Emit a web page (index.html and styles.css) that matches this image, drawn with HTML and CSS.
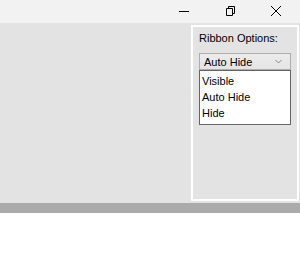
FILE: index.html
```html
<!DOCTYPE html>
<html>
<head>
<meta charset="utf-8">
<link rel="stylesheet" href="styles.css">
</head>
<body>
<div class="titlebar">
  <div class="tbtn">
    <svg width="12" height="12" viewBox="0 0 12 12"><path d="M1 6.5H11" stroke="#000" stroke-width="1" fill="none"/></svg>
  </div>
  <div class="tbtn">
    <svg width="12" height="12" viewBox="0 0 12 12"><path d="M2.5 3.5H8.5V10.5H2.5Z M4.5 3.5V1.5H10.5V8.5H8.5" stroke="#000" stroke-width="1" fill="none"/></svg>
  </div>
  <div class="tbtn">
    <svg width="12" height="12" viewBox="0 0 12 12"><path d="M1 1L11 11M11 1L1 11" stroke="#000" stroke-width="1" fill="none"/></svg>
  </div>
</div>
<div class="main">
  <div class="panel">
    <div class="label">Ribbon Options:</div>
    <div class="select">
      <span>Auto Hide</span>
      <svg width="7" height="5" viewBox="0 0 7 5"><path d="M0.5 1L3.5 4L6.5 1" stroke="#888" stroke-width="1" fill="none"/></svg>
    </div>
    <div class="list">
      <div class="item">Visible</div>
      <div class="item">Auto Hide</div>
      <div class="item">Hide</div>
    </div>
  </div>
</div>
<div class="statusbar"></div>
</body>
</html>
```
FILE: styles.css
```css
html, body {
  margin: 0;
  padding: 0;
  background: #ffffff;
  font-family: "Liberation Sans", Arial, sans-serif;
}
.titlebar {
  height: 23px;
  background: #f2f2f2;
  display: flex;
  justify-content: flex-end;
  padding-right: 1px;
}
.tbtn {
  width: 46px;
  height: 21px;
  display: flex;
  align-items: center;
  justify-content: center;
}
.main {
  height: 176px;
  background: #e3e3e3;
  display: flex;
  justify-content: flex-end;
  padding: 2px 1px 2px 0;
}
.panel {
  width: 104px;
  height: 172px;
  border: 2px solid #ffffff;
  background: #e3e3e3;
}
.label {
  margin: 5px 0 0 6px;
  font-size: 11px;
  line-height: 13px;
  color: #000;
}
.select {
  margin: 8px 0 0 6px;
  width: 92px;
  height: 17px;
  box-sizing: border-box;
  border: 1px solid #adadad;
  background: linear-gradient(#ececec, #e4e4e4);
  display: flex;
  align-items: center;
  justify-content: space-between;
  padding: 0 8px 0 4px;
  font-size: 11px;
  color: #000;
}
.list {
  margin: 0 0 0 6px;
  width: 92px;
  box-sizing: border-box;
  border: 1px solid #646464;
  background: #ffffff;
  padding: 2px 0 3px 0;
}
.item {
  font-size: 11px;
  line-height: 16px;
  padding-left: 2px;
  color: #000;
}
.statusbar {
  height: 10px;
  background: #ababab;
}
```
